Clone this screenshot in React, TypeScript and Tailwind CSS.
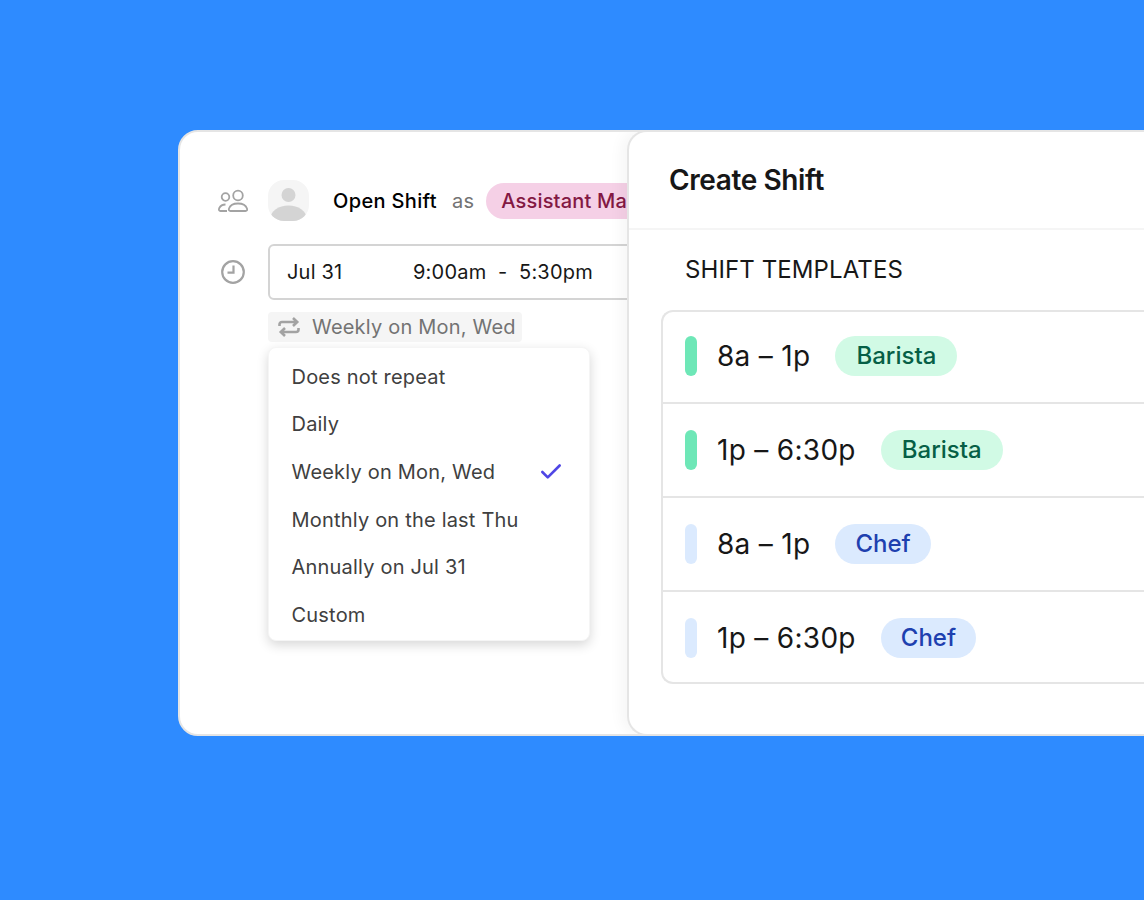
import React from 'react';
import { Check } from 'lucide-react';

const REPEAT_OPTIONS = [
  { label: 'Does not repeat' },
  { label: 'Daily' },
  { label: 'Weekly on Mon, Wed', selected: true },
  { label: 'Monthly on the last Thu' },
  { label: 'Annually on Jul 31' },
  { label: 'Custom' },
];

const TEMPLATES = [
  { time: '8a – 1p', role: 'Barista', bar: 'bg-[#6ee7b7]', pill: 'bg-[#d1fae5] text-[#065f46] px-[21px]' },
  { time: '1p – 6:30p', role: 'Barista', bar: 'bg-[#6ee7b7]', pill: 'bg-[#d1fae5] text-[#065f46] px-[21px]' },
  { time: '8a – 1p', role: 'Chef', bar: 'bg-[#dbeafe]', pill: 'bg-[#dbeafe] text-[#1e40af] px-[20px]' },
  { time: '1p – 6:30p', role: 'Chef', bar: 'bg-[#dbeafe]', pill: 'bg-[#dbeafe] text-[#1e40af] px-[20px]' },
];

const UsersIcon = () => (
  <svg width="32" height="24" viewBox="0 0 32 24" fill="none" stroke="#a3a3a3" strokeWidth="1.8" className="shrink-0">
    <circle cx="7.500" cy="8" r="3.800" />
    <circle cx="20" cy="6.500" r="4.800" />
    <path d="M13.500 22h14c1.500 0 2-1 1.500-2.500-1-3-4.500-5-9-5s-8 2-9 5c-.5 1.500 0 2.500 1.500 2.500z" />
    <path d="M9 22H2.500c-1.500 0-2-1-1.200-3 1-2 3.200-3.500 6.200-3.500" />
  </svg>
);

const ClockIcon = () => (
  <svg width="26" height="26" viewBox="0 0 26 26" fill="none" stroke="#a3a3a3" strokeWidth="2.2" className="shrink-0">
    <circle cx="13" cy="13" r="10.800" />
    <path d="M13.500 6.500v7.200H7.500" />
  </svg>
);

const RepeatIcon = () => (
  <svg width="22" height="20" viewBox="0 0 22 20" fill="none" stroke="#a3a3a3" strokeWidth="2.600" className="shrink-0">
    <path d="M1.500 9V7.500c0-1.500 1-2.500 2.500-2.500h15M15 1l4.200 4L15 9" />
    <path d="M20.500 11v1.500c0 1.500-1 2.500-2.500 2.500H3M7 11l-4.200 4L7 19" />
  </svg>
);

const Avatar = () => (
  <div className="w-[41px] h-[41px] rounded-[16px] bg-[#f5f5f5] overflow-hidden shrink-0">
    <svg width="41" height="41" viewBox="0 0 41 41" fill="#d4d4d4">
      <circle cx="20.500" cy="15" r="7" />
      <ellipse cx="20.500" cy="38" rx="18" ry="12.500" />
    </svg>
  </div>
);

const App: React.FC = () => {
  return (
    <div
      className="w-[1144px] h-[900px] overflow-hidden bg-[#2e8bff] pt-[130px] pl-[178px] text-[#171717]"
      style={{ fontFamily: 'Inter, sans-serif' }}
    >
      <div className="flex w-[1100px] h-[606px] rounded-[20px] bg-white border-2 border-[#e5e5e5] overflow-hidden">
        {/* left: shift form */}
        <div className="w-[447px] shrink-0 overflow-hidden pt-[48px] pl-[38px] tracking-[0.2px]">
          <div className="flex items-center h-[41px] whitespace-nowrap">
            <UsersIcon />
            <div className="ml-[18px]">
              <Avatar />
            </div>
            <span className="ml-[24px] text-[20px] font-[450] tracking-[0.35px] text-black">Open Shift</span>
            <span className="ml-[15px] text-[20px] text-[#737373]">as</span>
            <span className="ml-[12px] h-[36px] flex items-center rounded-[18px] bg-[#f5d0e6] pl-[15px] pr-[16px] text-[20px] font-[450] text-[#831843]">
              Assistant Manager
            </span>
          </div>

          <div className="flex mt-[23px]">
            <div className="w-[50px] shrink-0 h-[56px] flex items-center pl-[2px]">
              <ClockIcon />
            </div>
            <div className="min-w-0">
              <div className="w-[500px] h-[56px] flex items-center rounded-[6px] border-2 border-[#d4d4d4] pl-[17px] text-[20px] whitespace-nowrap">
                <span className="w-[126px]">Jul 31</span>
                <span>9:00am&nbsp; -&nbsp; 5:30pm</span>
              </div>
              <div className="mt-[12px] w-[254px] h-[30px] flex items-center rounded-[4px] bg-[#f5f5f5] pl-[10px] text-[20px] text-[#737373] whitespace-nowrap">
                <RepeatIcon />
                <span className="ml-[12px]">Weekly on Mon, Wed</span>
              </div>
              <div className="mt-[5px] w-[322px] h-[294px] rounded-[8px] border border-[#f5f5f5] bg-white py-[5px] shadow-[0_4px_12px_rgba(0,0,0,0.16)]">
                {REPEAT_OPTIONS.map((option) => (
                  <div
                    key={option.label}
                    className="h-[47.600px] flex items-center justify-between pl-[22.500px] pr-[25px] text-[20px] text-[#404040]"
                  >
                    <span>{option.label}</span>
                    {option.selected && <Check className="w-[26px] h-[26px] text-[#4f46e5]" strokeWidth={2.400} />}
                  </div>
                ))}
              </div>
            </div>
          </div>
        </div>

        {/* right: create shift panel */}
        <div className="flex-1 h-full -my-[2px] min-h-[606px] rounded-l-[20px] border-2 border-r-0 border-[#e5e5e5] bg-white shadow-[-6px_0_14px_rgba(0,0,0,0.04)]">
          <div className="h-[98px] flex items-center pl-[40px] border-b-2 border-[#f5f5f5]">
            <h2 className="text-[28px] font-semibold tracking-[-0.4px]">Create Shift</h2>
          </div>
          <p className="mt-[21px] ml-[56px] text-[24px] leading-[38px] tracking-[0.1px] whitespace-nowrap">SHIFT TEMPLATES</p>
          <div className="mt-[21px] ml-[32px] rounded-l-[12px] border-2 border-r-0 border-[#e5e5e5]">
            {TEMPLATES.map((t, i) => (
              <div
                key={i}
                className={`flex items-center pl-[22px] ${
                  i === 0 ? 'h-[92px] -mt-[2px]' : 'h-[94px] border-t-2 border-[#e5e5e5]'
                } ${i === TEMPLATES.length - 1 ? '-mb-[2px]' : ''}`}
              >
                <div className={`w-[12px] h-[40px] rounded-[6px] ${t.bar}`} />
                <span className="ml-[20px] text-[28px] tracking-[0.3px] whitespace-nowrap">{t.time}</span>
                <span className={`ml-[25px] h-[40px] flex items-center rounded-[20px] text-[24px] font-[450] ${t.pill}`}>
                  {t.role}
                </span>
              </div>
            ))}
          </div>
        </div>
      </div>
    </div>
  );
};

export default App;
